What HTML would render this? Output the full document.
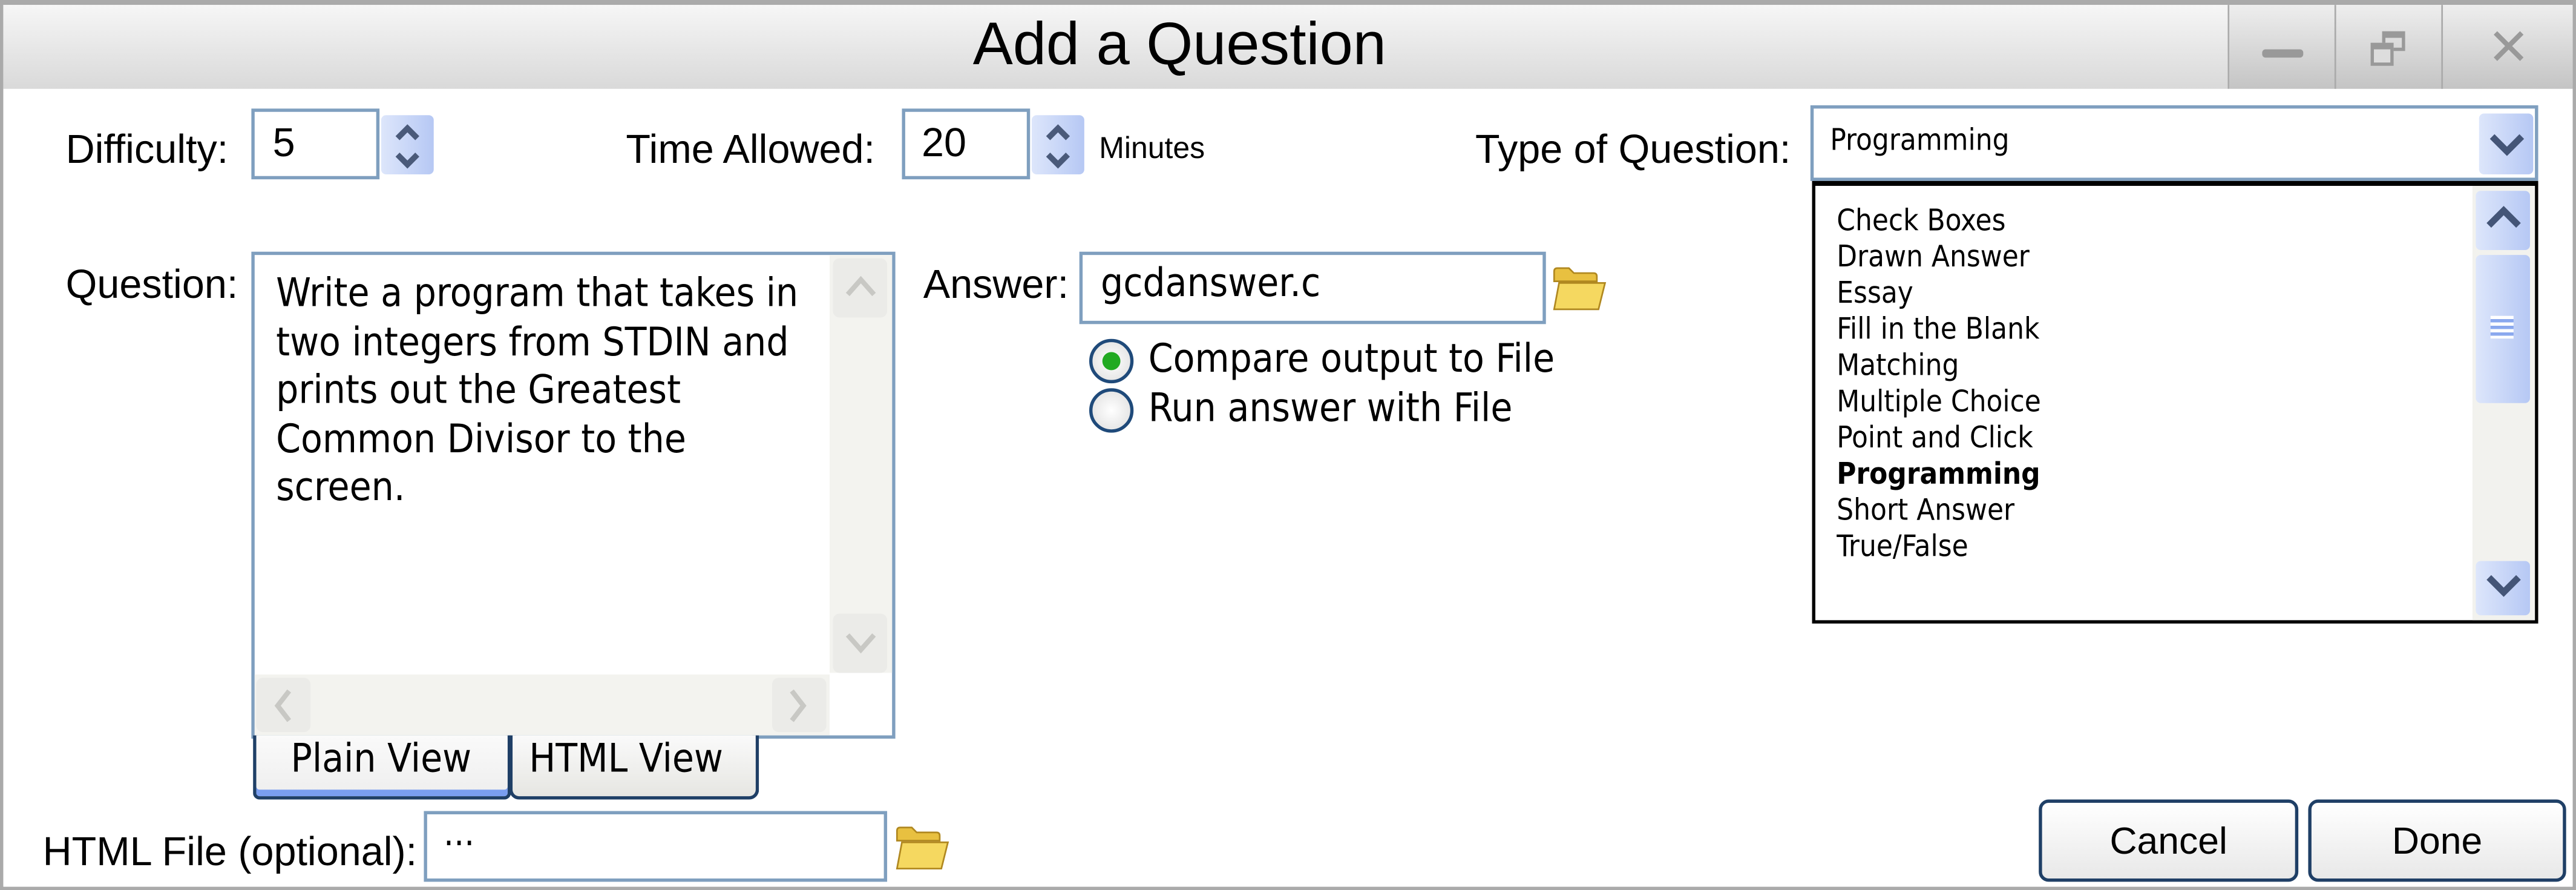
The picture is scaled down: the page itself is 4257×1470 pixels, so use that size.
<!DOCTYPE html>
<html><head><meta charset="utf-8"><style>
*{margin:0;padding:0;box-sizing:border-box}
html,body{width:4257px;height:1470px;overflow:hidden;background:#fff}
#s{position:absolute;left:0;top:0;width:1568px;height:541px;transform:scale(2.7149,2.7172);transform-origin:0 0;font-family:"DejaVu Sans Condensed","DejaVu Sans","Liberation Sans",sans-serif;color:#000;background:#fff}
.a{position:absolute;white-space:nowrap}
.inp{position:absolute;background:#fff;border:2px solid #7f9fbf}
.spin{position:absolute;background:linear-gradient(90deg,#dde6fb,#b6c8f4);border-radius:3px}
.lbl{font-family:"Liberation Sans",sans-serif;font-size:24.5px}
.btn{position:absolute;border:2px solid #1f3f66;border-radius:6px;background:linear-gradient(#fff,#e8e8e8);font-family:"Liberation Sans",sans-serif;font-size:23px;text-align:center}
</style></head><body><div id="s">
<div class="a" style="left:0;top:0;width:1568px;height:541px;border:2px solid #aaa;border-top-width:3px"></div>
<div class="a" style="left:2px;top:3px;width:1354px;height:51px;background:linear-gradient(#f6f6f6,#d9d9d9)"></div>
<div class="a" style="left:0;top:3px;width:1436px;height:51px;text-align:center;line-height:48px;font-family:'Liberation Sans',sans-serif;font-size:36.5px">Add a Question</div>
<div class="a" style="left:1356px;top:3px;width:210px;height:51px;background:linear-gradient(#eee,#c4c4c4);border-left:1px solid #aaa"></div>
<div class="a" style="left:1421px;top:3px;width:1px;height:51px;background:#aaa"></div>
<div class="a" style="left:1486px;top:3px;width:1px;height:51px;background:#aaa"></div>
<div class="a" style="left:1377px;top:30px;width:25px;height:5px;background:#999;border-radius:2px"></div>
<div class="a" style="left:1450px;top:19px;width:14px;height:12px;border:2px solid #999;border-top-width:4px"></div>
<div class="a" style="left:1443px;top:26px;width:14px;height:14px;border:2px solid #999;border-top-width:4px;background:#ddd"></div>
<svg class="a" style="left:1516px;top:17px" width="22" height="22"><path d="M3 3 L19 19 M19 3 L3 19" stroke="#999" stroke-width="3"/></svg>

<div class="a lbl" style="left:40px;top:78px">Difficulty:</div>
<div class="inp" style="left:153px;top:66px;width:78px;height:43px"></div>
<div class="a lbl" style="left:166px;top:74px">5</div>
<div class="spin" style="left:232px;top:70px;width:32px;height:36px"></div>
<svg class="a" style="left:238px;top:74px" width="20" height="30"><path d="M4 10 L10 4 L16 10 M4 20 L10 26 L16 20" fill="none" stroke="#4a5a7a" stroke-width="3.5"/></svg>

<div class="a lbl" style="left:381px;top:78px">Time Allowed:</div>
<div class="inp" style="left:549px;top:66px;width:78px;height:43px"></div>
<div class="a lbl" style="left:561px;top:74px">20</div>
<div class="spin" style="left:628px;top:70px;width:32px;height:36px"></div>
<svg class="a" style="left:634px;top:74px" width="20" height="30"><path d="M4 10 L10 4 L16 10 M4 20 L10 26 L16 20" fill="none" stroke="#4a5a7a" stroke-width="3.5"/></svg>
<div class="a" style="left:669px;top:79px;font-family:'Liberation Sans',sans-serif;font-size:18.4px">Minutes</div>

<div class="a lbl" style="left:898px;top:78px">Type of Question:</div>
<div class="inp" style="left:1102px;top:64px;width:443px;height:46px"></div>
<div class="a" style="left:1114px;top:75px;font-size:18px">Programming</div>
<div class="spin" style="left:1509px;top:69px;width:33px;height:37px"></div>
<svg class="a" style="left:1514px;top:80px" width="24" height="16"><path d="M3 3 L12 12 L21 3" fill="none" stroke="#445577" stroke-width="4"/></svg>

<div class="a" style="left:1103px;top:110px;width:442px;height:269px;border:2px solid #000;border-top-width:3px;background:#fff"></div>
<div class="a" style="left:1505px;top:113px;width:38px;height:264px;background:#f2f2ee"></div>
<div class="spin" style="left:1507px;top:116px;width:33px;height:36px"></div>
<svg class="a" style="left:1512px;top:124px" width="24" height="16"><path d="M3 13 L12 4 L21 13" fill="none" stroke="#445577" stroke-width="4"/></svg>
<div class="spin" style="left:1507px;top:155px;width:33px;height:90px"></div>
<div class="a" style="left:1516px;top:192px;width:14px;height:14px;background:repeating-linear-gradient(#fff 0 2px,#8aa8ee 2px 4px)"></div>
<div class="spin" style="left:1507px;top:341px;width:33px;height:33px"></div>
<svg class="a" style="left:1512px;top:348px" width="24" height="16"><path d="M3 3 L12 12 L21 3" fill="none" stroke="#445577" stroke-width="4"/></svg>
<div class="a" style="left:1118px;top:124px;font-size:18px;line-height:22px">Check Boxes<br>Drawn Answer<br>Essay<br>Fill in the Blank<br>Matching<br>Multiple Choice<br>Point and Click<br><b>Programming</b><br>Short Answer<br>True/False</div>

<div class="a lbl" style="left:40px;top:160px">Question:</div>
<div class="inp" style="left:153px;top:153px;width:392px;height:296px"></div>
<div class="a" style="left:168px;top:164px;font-size:24px;line-height:29.5px">Write a program that takes in<br>two integers from STDIN and<br>prints out the Greatest<br>Common Divisor to the<br>screen.</div>
<div class="a" style="left:505px;top:155px;width:38px;height:254px;background:#f3f3ef"></div>
<div class="a" style="left:507px;top:157px;width:33px;height:36px;background:#ebebe8;border-radius:4px"></div>
<svg class="a" style="left:512px;top:166px" width="24" height="16"><path d="M4 13 L12 4 L20 13" fill="none" stroke="#c8c8c4" stroke-width="3"/></svg>
<div class="a" style="left:507px;top:373px;width:33px;height:36px;background:#ebebe8;border-radius:4px"></div>
<svg class="a" style="left:512px;top:383px" width="24" height="16"><path d="M4 3 L12 12 L20 3" fill="none" stroke="#c8c8c4" stroke-width="3"/></svg>
<div class="a" style="left:155px;top:410px;width:350px;height:37px;background:#f3f3ef"></div>
<div class="a" style="left:156px;top:412px;width:33px;height:33px;background:#ebebe8;border-radius:4px"></div>
<svg class="a" style="left:164px;top:417px" width="16" height="24"><path d="M12 3 L5 12 L12 21" fill="none" stroke="#c8c8c4" stroke-width="3"/></svg>
<div class="a" style="left:470px;top:412px;width:33px;height:33px;background:#ebebe8;border-radius:4px"></div>
<svg class="a" style="left:478px;top:417px" width="16" height="24"><path d="M4 3 L11 12 L4 21" fill="none" stroke="#c8c8c4" stroke-width="3"/></svg>

<div class="a" style="left:154px;top:447px;width:157px;height:39px;border:2px solid #1f3f66;border-top:none;border-radius:0 0 4px 4px;background:linear-gradient(#fafafa,#eee);box-shadow:inset 0 -4px 0 #7a9ef0"></div>
<div class="a" style="left:177px;top:447px;font-size:24px">Plain View</div>
<div class="a" style="left:310px;top:447px;width:152px;height:39px;border:2px solid #1f3f66;border-top:none;border-radius:0 0 6px 6px;background:linear-gradient(#fafafa,#e6e6e2)"></div>
<div class="a" style="left:322px;top:447px;font-size:24px">HTML View</div>

<div class="a lbl" style="left:26px;top:505px">HTML File (optional):</div>
<div class="inp" style="left:258px;top:493px;width:282px;height:43px"></div>
<div class="a" style="left:270px;top:501px;font-size:22px">···</div>

<div class="a lbl" style="left:562px;top:160px">Answer:</div>
<div class="inp" style="left:657px;top:153px;width:284px;height:44px"></div>
<div class="a" style="left:670px;top:158px;font-size:24px">gcdanswer.c</div>

<svg class="a" style="left:944px;top:161px" width="36" height="30"><path d="M2 8 L2 4 Q2 2 4 2 L11 2 L14 5 L26 5 Q28 5 28 7 L28 10 L2 10 Z" fill="#e8c040" stroke="#b08820"/><path d="M2 27 L5 11 L33 11 L29 27 Z" fill="#f5d860" stroke="#b08820"/></svg>
<svg class="a" style="left:544px;top:501px" width="36" height="30"><path d="M2 8 L2 4 Q2 2 4 2 L11 2 L14 5 L26 5 Q28 5 28 7 L28 10 L2 10 Z" fill="#e8c040" stroke="#b08820"/><path d="M2 27 L5 11 L33 11 L29 27 Z" fill="#f5d860" stroke="#b08820"/></svg>

<div class="a" style="left:663px;top:206px;width:27px;height:27px;border:2px solid #1f4a7a;border-radius:50%;background:radial-gradient(#fff,#ddd)"></div>
<div class="a" style="left:671px;top:214px;width:11px;height:11px;border-radius:50%;background:#22aa22"></div>
<div class="a" style="left:699px;top:204px;font-size:24px">Compare output to File</div>
<div class="a" style="left:663px;top:236px;width:27px;height:27px;border:2px solid #1f4a7a;border-radius:50%;background:radial-gradient(#fff,#ddd)"></div>
<div class="a" style="left:699px;top:234px;font-size:24px">Run answer with File</div>

<div class="btn" style="left:1241px;top:486px;width:158px;height:50px;line-height:46px">Cancel</div>
<div class="btn" style="left:1405px;top:486px;width:157px;height:50px;line-height:46px">Done</div>
</div></body></html>
